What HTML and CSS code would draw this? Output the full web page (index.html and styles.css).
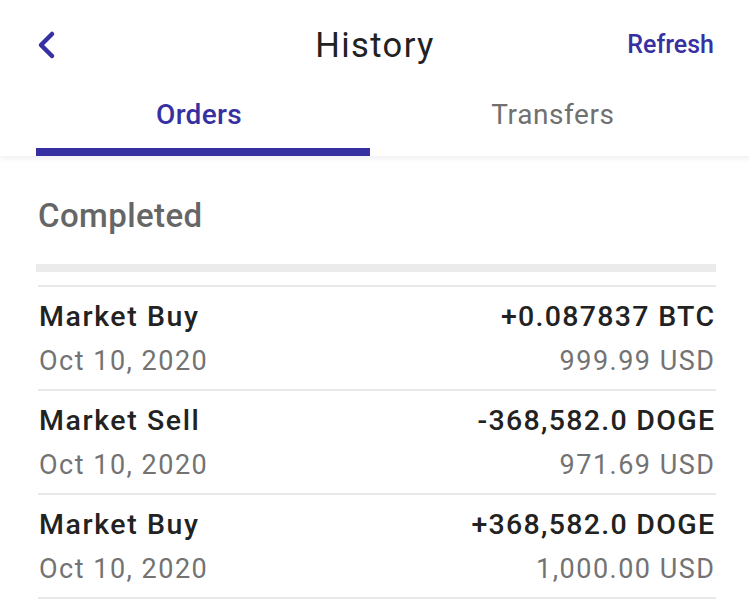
FILE: index.html
```html
<!DOCTYPE html>
<html>
<head>
<meta charset="utf-8">
<link rel="stylesheet" href="styles.css">
</head>
<body>
<div class="app">
  <header class="topbar">
    <div class="back">
      <svg width="22" height="30" viewBox="0 0 22 30"><polyline points="16,4 5,15 16,26" fill="none" stroke="#3730a3" stroke-width="4.5" stroke-linecap="round" stroke-linejoin="round"/></svg>
    </div>
    <h1 class="title">History</h1>
    <div class="refresh">Refresh</div>
  </header>
  <nav class="tabs">
    <div class="tab active"><span class="tab-label">Orders</span><span class="indicator"></span></div>
    <div class="tab second"><span class="tab-label">Transfers</span></div>
  </nav>
  <main class="content">
    <h2 class="section">Completed</h2>
    <div class="bar"></div>
    <ul class="list">
      <li class="row">
        <div class="line"><span class="kind">Market Buy</span><span class="amount">+0.087837 BTC</span></div>
        <div class="line"><span class="date">Oct 10, 2020</span><span class="usd">999.99 USD</span></div>
      </li>
      <li class="row">
        <div class="line"><span class="kind">Market Sell</span><span class="amount">-368,582.0 DOGE</span></div>
        <div class="line"><span class="date">Oct 10, 2020</span><span class="usd">971.69 USD</span></div>
      </li>
      <li class="row">
        <div class="line"><span class="kind">Market Buy</span><span class="amount">+368,582.0 DOGE</span></div>
        <div class="line"><span class="date">Oct 10, 2020</span><span class="usd">1,000.00 USD</span></div>
      </li>
    </ul>
  </main>
</div>
</body>
</html>
```
FILE: styles.css
```css
* { box-sizing: border-box; }
html, body { margin: 0; padding: 0; background: #fff; }
body { font-family: Roboto, "Noto Sans", sans-serif; color: #222; }
.app { width: 750px; }

.topbar {
  height: 88px;
  padding: 2px 36px 0 36px;
  display: grid;
  grid-template-columns: 1fr auto 1fr;
  align-items: center;
}
.back { display: flex; align-items: center; }
.back svg { display: block; }
.title {
  margin: 0;
  font-size: 34.5px;
  font-weight: 400;
  letter-spacing: 1.4px;
  color: #222;
  line-height: 40px;
}
.refresh {
  justify-self: end;
  font-size: 25px;
  font-weight: 500;
  color: #3730a3;
  line-height: 40px;
}

.tabs {
  display: grid;
  grid-template-columns: 334px 1fr;
  column-gap: 16px;
  padding: 0 36px;
  height: 68px;
  box-shadow: 0 3px 5px rgba(0,0,0,0.06);
  position: relative;
}
.tab {
  display: flex;
  flex-direction: column;
  align-items: center;
  padding-top: 7px;
}
.tab.active .tab-label { padding-right: 8px; }
.tab.second .tab-label { padding-left: 6px; }
.tab-label {
  font-size: 28px;
  line-height: 40px;
  letter-spacing: 0.6px;
  color: #707070;
}
.tab.active .tab-label { color: #3730a3; font-weight: 500; letter-spacing: 0.3px; }
.indicator {
  margin-top: auto;
  align-self: stretch;
  height: 8px;
  background: #3730a3;
}

.content { padding: 40px 34px 0 36px; }
.section {
  margin: 0 0 0 2px;
  font-size: 33px;
  line-height: 40px;
  font-weight: 500;
  color: #666;
  letter-spacing: 0.4px;
}
.bar {
  margin-top: 28px;
  height: 8px;
  background: #ebebeb;
}
.list { list-style: none; margin: 13px 0 0 2px; padding: 0; border-top: 2px solid #e8e8e8; }
.row {
  padding: 10px 2px 8px 1px;
  display: flex;
  flex-direction: column;
  gap: 4px;
  border-bottom: 2px solid #e8e8e8;
}
.line { display: flex; justify-content: space-between; align-items: baseline; line-height: 40px; }
.kind, .amount { font-size: 28.5px; font-weight: 500; color: #222; letter-spacing: 1.6px; }
.amount { letter-spacing: 1.3px; margin-right: -1.3px; }
.date, .usd { font-size: 27px; color: #737373; letter-spacing: 1.5px; }
.usd { margin-right: -1.5px; }
```
